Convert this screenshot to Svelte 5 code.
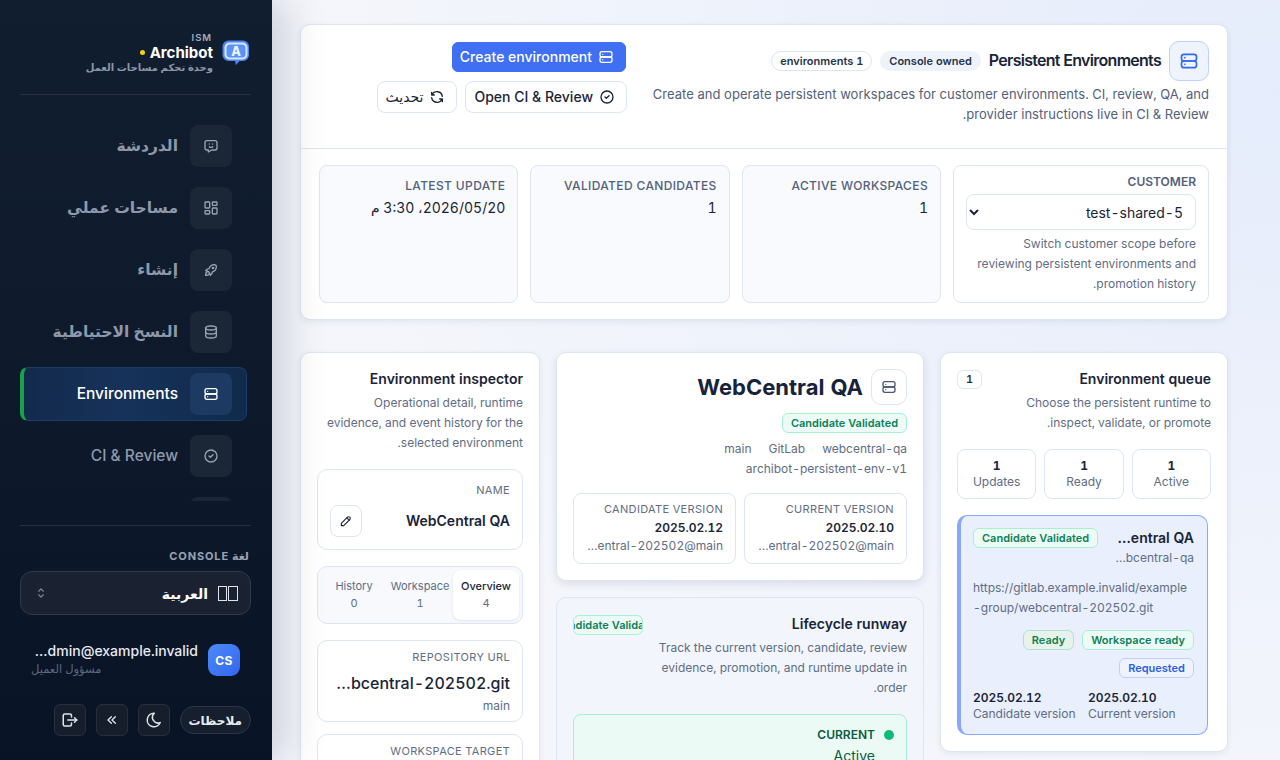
<script>
  const paths = {
    server: ['M6 4h12a3 3 0 0 1 3 3v2a3 3 0 0 1 -3 3h-12a3 3 0 0 1 -3 -3v-2a3 3 0 0 1 3 -3z', 'M6 12h12a3 3 0 0 1 3 3v2a3 3 0 0 1 -3 3h-12a3 3 0 0 1 -3 -3v-2a3 3 0 0 1 3 -3z', 'M7 8v.01', 'M7 16v.01'],
    chat: ['M18 4a3 3 0 0 1 3 3v8a3 3 0 0 1 -3 3h-5l-5 3v-3h-2a3 3 0 0 1 -3 -3v-8a3 3 0 0 1 3 -3h12z', 'M9.5 9h.01', 'M14.5 9h.01', 'M9.5 13a3.5 3.5 0 0 0 5 0'],
    layout: ['M4 3h5a1 1 0 0 1 1 1v7a1 1 0 0 1 -1 1h-5a1 1 0 0 1 -1 -1v-7a1 1 0 0 1 1 -1z', 'M15 3h5a1 1 0 0 1 1 1v3a1 1 0 0 1 -1 1h-5a1 1 0 0 1 -1 -1v-3a1 1 0 0 1 1 -1z', 'M15 12h5a1 1 0 0 1 1 1v7a1 1 0 0 1 -1 1h-5a1 1 0 0 1 -1 -1v-7a1 1 0 0 1 1 -1z', 'M4 16h5a1 1 0 0 1 1 1v3a1 1 0 0 1 -1 1h-5a1 1 0 0 1 -1 -1v-3a1 1 0 0 1 1 -1z'],
    rocket: ['M4 13a8 8 0 0 1 7 7a6 6 0 0 0 3 -5a9 9 0 0 0 6 -8a3 3 0 0 0 -3 -3a9 9 0 0 0 -8 6a6 6 0 0 0 -5 3', 'M7 14a6 6 0 0 0 -3 6a6 6 0 0 0 6 -3', 'M15 9m-1 0a1 1 0 1 0 2 0a1 1 0 1 0 -2 0'],
    database: ['M12 6m-8 0a8 3 0 1 0 16 0a8 3 0 1 0 -16 0', 'M4 6v6a8 3 0 0 0 16 0v-6', 'M4 12v6a8 3 0 0 0 16 0v-6'],
    check: ['M12 12m-9 0a9 9 0 1 0 18 0a9 9 0 1 0 -18 0', 'M9 12l2 2l4 -4'],
    refresh: ['M20 11a8.1 8.1 0 0 0 -15.5 -2m-.5 -4v4h4', 'M4 13a8.1 8.1 0 0 0 15.5 2m.5 4v-4h-4'],
    pencil: ['M4 20h4l10.5 -10.5a2.828 2.828 0 1 0 -4 -4l-10.5 10.5v4', 'M13.5 6.5l4 4'],
    moon: ['M12 3c.132 0 .263 0 .393 0a7.5 7.5 0 0 0 7.92 12.446a9 9 0 1 1 -8.313 -12.454z'],
    chevrons: ['M11 7l-5 5l5 5', 'M17 7l-5 5l5 5'],
    logout: ['M14 8v-2a2 2 0 0 0 -2 -2h-7a2 2 0 0 0 -2 2v12a2 2 0 0 0 2 2h7a2 2 0 0 0 2 -2v-2', 'M9 12h12l-3 -3', 'M18 15l3 -3'],
    selector: ['M8 9l4 -4l4 4', 'M16 15l-4 4l-4 -4']
  };
  const nav = [
    { label: 'الدردشة', icon: 'chat' },
    { label: 'مساحات عملي', icon: 'layout' },
    { label: 'إنشاء', icon: 'rocket' },
    { label: 'النسخ الاحتياطية', icon: 'database' },
    { label: 'Environments', icon: 'server', active: true, latin: true },
    { label: 'CI & Review', icon: 'check', latin: true },
    { label: '', icon: 'layout' }
  ];
  const stats = [
    { label: 'ACTIVE WORKSPACES', value: '1' },
    { label: 'VALIDATED CANDIDATES', value: '1' },
    { label: 'LATEST UPDATE', value: '2026/05/20، 3:30 م' }
  ];
  const metrics = [['1', 'Active'], ['1', 'Ready'], ['1', 'Updates']];
  const versions = [
    { label: 'CURRENT VERSION', value: '2025.02.10' },
    { label: 'CANDIDATE VERSION', value: '2025.02.12' }
  ];
  const tabs = [
    { label: 'Overview', n: 4, active: true },
    { label: 'Workspace', n: 1 },
    { label: 'History', n: 0 }
  ];
</script>

{#snippet icon(name, size)}
  <svg class="ico" width={size} height={size} viewBox="0 0 24 24" fill="none" stroke="currentColor" stroke-width="2" stroke-linecap="round" stroke-linejoin="round" aria-hidden="true">
    {#each paths[name] as d}<path {d} />{/each}
  </svg>
{/snippet}

<div class="shell">
  <aside class="sidebar">
    <div class="brand">
      <svg class="logo" width="28" height="26" viewBox="0 0 28 26" aria-hidden="true">
        <path d="M7 0.500h14a6 6 0 0 1 6 6v8.500a6 6 0 0 1 -6 6h-3.500l-3.500 4l-1 -4h-6.500a6 6 0 0 1 -6 -6v-8.500a6 6 0 0 1 6 -6z" fill="#4d86f8" />
        <rect x="2.500" y="2.500" width="23" height="17" rx="5" fill="#d8e6ff" />
        <rect x="4.500" y="4.500" width="19" height="13" rx="3.500" fill="#5b93fa" />
        <text x="14" y="16.300" text-anchor="middle" class="logo-a">A</text>
      </svg>
      <div class="brand-text">
        <div class="ism">ISM</div>
        <div class="brand-name"><span>Archibot</span><i class="dot"></i></div>
        <div class="brand-sub">وحدة تحكم مساحات العمل</div>
      </div>
    </div>

    <nav class="nav">
      {#each nav as item}
        <div class="nav-item" class:active={item.active} class:latin={item.latin}>
          <span class="nav-ico">{@render icon(item.icon, 16)}</span>
          {#if item.label}<span class="nav-label">{item.label}</span>{/if}
        </div>
      {/each}
    </nav>

    <div class="side-foot">
      <div class="lang-label">لغة CONSOLE</div>
      <div class="lang">
        <span class="flag" aria-hidden="true"><i></i><i></i></span>
        <span class="lang-name">العربية</span>
        <span class="lang-chev">{@render icon('selector', 14)}</span>
      </div>
      <div class="user">
        <div class="avatar">CS</div>
        <div class="user-text">
          <div class="email">customer-admin@example.invalid</div>
          <div class="role">مسؤول العميل</div>
        </div>
      </div>
      <div class="tools">
        <button class="pill">ملاحظات</button>
        <button class="tool">{@render icon('moon', 18)}</button>
        <button class="tool">{@render icon('chevrons', 16)}</button>
        <button class="tool">{@render icon('logout', 18)}</button>
      </div>
    </div>
  </aside>

  <main class="main">
    <section class="card hero">
      <header class="hero-head">
        <div class="hero-text">
          <div class="hero-title">
            <span class="hero-ico">{@render icon('server', 20)}</span>
            <h1>Persistent Environments</h1>
            <span class="pill-tag soft">Console owned</span>
            <span class="pill-tag line">1 environments</span>
          </div>
          <p class="hero-desc">Create and operate persistent workspaces for customer environments. CI, review, QA, and provider instructions live in CI &amp; Review.</p>
        </div>
        <div class="hero-actions">
          <button class="btn primary">{@render icon('server', 16)}<span>Create environment</span></button>
          <div class="action-row">
            <button class="btn">{@render icon('check', 16)}<span>Open CI &amp; Review</span></button>
            <button class="btn">{@render icon('refresh', 16)}<span>تحديث</span></button>
          </div>
        </div>
      </header>
      <div class="stats">
        <div class="stat customer">
          <label class="cust-label" for="cust">CUSTOMER</label>
          <select id="cust" class="cust-select"><option>test-shared-5</option></select>
          <p class="cust-desc">Switch customer scope before reviewing persistent environments and promotion history.</p>
        </div>
        {#each stats as s}
          <div class="stat">
            <div class="stat-label">{s.label}</div>
            <div class="stat-value">{s.value}</div>
          </div>
        {/each}
      </div>
    </section>

    <div class="columns">
      <section class="card panel queue">
        <div class="panel-head">
          <div class="head-text">
            <h2>Environment queue</h2>
            <p class="panel-desc">Choose the persistent runtime to inspect, validate, or promote.</p>
          </div>
          <span class="count">1</span>
        </div>
        <div class="metrics">
          {#each metrics as m}
            <div class="metric"><b>{m[0]}</b><span>{m[1]}</span></div>
          {/each}
        </div>
        <article class="env">
          <div class="env-top">
            <div class="env-names">
              <div class="env-name">WebCentral QA</div>
              <div class="env-slug">webcentral-qa</div>
            </div>
            <span class="badge green">Candidate Validated</span>
          </div>
          <div class="env-url">https://gitlab.example.invalid/example-group/webcentral-202502.git</div>
          <div class="env-tags">
            <span class="badge green">Workspace ready</span>
            <span class="badge ready">Ready</span>
            <span class="badge blue">Requested</span>
          </div>
          <div class="env-vers">
            <div><b>2025.02.10</b><span>Current version</span></div>
            <div><b>2025.02.12</b><span>Candidate version</span></div>
          </div>
        </article>
      </section>

      <div class="center">
        <section class="card panel detail">
          <div class="detail-head">
            <span class="square">{@render icon('server', 16)}</span>
            <h2 class="big">WebCentral QA</h2>
          </div>
          <div class="detail-badge"><span class="badge green">Candidate Validated</span></div>
          <div class="meta">
            <span>webcentral-qa</span><span>GitLab</span><span>main</span><span>archibot-persistent-env-v1</span>
          </div>
          <div class="vers">
            {#each versions as v}
              <div class="ver">
                <div class="ver-label">{v.label}</div>
                <div class="ver-value">{v.value}</div>
                <div class="ver-sub">webcentral-202502@main</div>
              </div>
            {/each}
          </div>
        </section>

        <section class="card panel runway">
          <div class="panel-head">
            <div class="head-text">
              <h2>Lifecycle runway</h2>
              <p class="panel-desc">Track the current version, candidate, review evidence, promotion, and runtime update in order.</p>
            </div>
            <span class="badge green clipped"><span>Candidate Validated</span></span>
          </div>
          <div class="step">
            <div class="step-head"><i class="step-dot"></i><span>CURRENT</span></div>
            <div class="step-val">Active</div>
          </div>
        </section>
      </div>

      <section class="card panel inspector">
        <h2>Environment inspector</h2>
        <p class="panel-desc">Operational detail, runtime evidence, and event history for the selected environment.</p>
        <div class="box name-box">
          <div class="box-label">NAME</div>
          <div class="name-row">
            <span class="name-val">WebCentral QA</span>
            <button class="edit">{@render icon('pencil', 14)}</button>
          </div>
        </div>
        <div class="tabs">
          {#each tabs as t}
            <div class="tab" class:on={t.active}><span>{t.label}</span><span>{t.n}</span></div>
          {/each}
        </div>
        <div class="box repo">
          <div class="box-label">REPOSITORY URL</div>
          <div class="box-val">https://gitlab.example.invalid/example-group/webcentral-202502.git</div>
          <div class="box-sub">main</div>
        </div>
        <div class="box target">
          <div class="box-label">WORKSPACE TARGET</div>
        </div>
      </section>
    </div>
  </main>
</div>

<style>
  :global(body) {
    margin: 0;
    overflow: hidden;
    font-family: Inter, "DejaVu Sans", sans-serif;
    font-feature-settings: "tnum";
    color: #1a2438;
  }
  * { box-sizing: border-box; }
  h1, h2, p { margin: 0; }
  button, select { font-family: inherit; font-feature-settings: inherit; }
  button { cursor: pointer; }
  .ico { display: block; flex: none; }

  .shell { display: flex; height: 760px; overflow: hidden; }

  /* sidebar */
  .sidebar {
    direction: rtl;
    width: 272px;
    flex: none;
    position: relative;
    z-index: 2;
    display: flex;
    flex-direction: column;
    padding: 0 21px 24px 20px;
    background: linear-gradient(180deg, #111e30 0%, #0f1b2d 40%, #091326 100%);
    box-shadow: 12px 0 40px rgba(15, 23, 42, 0.18);
  }
  .brand {
    height: 95px;
    flex: none;
    display: flex;
    align-items: center;
    gap: 9px;
    padding-top: 10px;
    border-bottom: 1px solid #26303f;
  }
  .logo { margin-inline-start: 1px; margin-top: 2px; }
  .logo-a { font: 800 12.500px Inter, sans-serif; fill: #eef4ff; }
  .brand-text { display: flex; flex-direction: column; }
  .ism { font-size: 9.500px; font-weight: 600; letter-spacing: 0.1em; color: #a2adbb; line-height: 15px; margin-inline-start: 1px; }
  .brand-name { display: flex; align-items: center; gap: 5px; font-size: 15px; font-weight: 700; color: #fff; line-height: 15px; }
  .dot { width: 5px; height: 5px; border-radius: 50%; background: #facc15; }
  .brand-sub { font-size: 10px; font-weight: 700; color: #8b97a8; line-height: 15px; }

  .nav {
    flex: none;
    height: 406px;
    overflow: hidden;
    padding-top: 24px;
    margin-inline-start: 4px;
    display: flex;
    flex-direction: column;
    gap: 8px;
  }
  .nav-item {
    flex: none;
    height: 54px;
    display: flex;
    align-items: center;
    gap: 12px;
    padding-inline-start: 14px;
    border: 1px solid transparent;
    border-radius: 8px;
    color: #8d99ab;
    font-size: 15.500px;
    font-weight: 600;
    line-height: 20px;
  }
  .nav-item.latin { font-weight: 500; }
  .nav-label { margin-top: -1px; }
  .nav-item.active {
    color: #fff;
    background: linear-gradient(270deg, #0f2a4a 0%, #17325a 55%, #122a4c 100%);
    border-color: #1d3c69;
    border-left: 4px solid #16a34a;
  }
  .nav-ico {
    width: 42px;
    height: 42px;
    flex: none;
    border-radius: 8px;
    display: flex;
    align-items: center;
    justify-content: center;
    background: #1b2636;
    color: #98a4b5;
  }
  .active .nav-ico { background: #1d3a63; color: #fff; }

  .side-foot { margin-top: 24px; border-top: 1px solid #26303f; padding-top: 22px; }
  .lang-label { font-size: 11px; font-weight: 700; letter-spacing: 0.08em; color: #97a3b4; line-height: 16px; margin-inline-start: 2px; }
  .lang {
    margin-top: 7px;
    height: 44px;
    border: 1px solid #2f3949;
    border-radius: 12px;
    background: #1a2231;
    display: flex;
    align-items: center;
    padding: 0 12px;
    gap: 10px;
    color: #fff;
    font-size: 14px;
    font-weight: 700;
  }
  .flag { display: flex; gap: 1px; }
  .flag i { display: block; width: 10px; height: 15px; border: 1px solid #dfe3ea; }
  .flag i:last-child { width: 9px; }
  .lang-chev { margin-inline-start: auto; margin-inline-end: 1px; color: #7e8a9b; }

  .user { display: flex; align-items: center; gap: 10px; margin-top: 29px; padding-inline-start: 11px; height: 32px; }
  .avatar {
    width: 32px; height: 32px; flex: none;
    border-radius: 9px;
    background: linear-gradient(135deg, #4c8bf8, #3366f0);
    color: #fff; font-size: 12px; font-weight: 700; letter-spacing: 0.03em;
    display: flex; align-items: center; justify-content: center;
  }
  .user-text { min-width: 0; flex: 1; margin-inline-end: 11px; }
  .email { font-size: 14px; font-weight: 500; color: #e6eaf0; line-height: 18px; white-space: nowrap; overflow: hidden; text-overflow: ellipsis; }
  .role { font-size: 11.500px; color: #5d6a7d; line-height: 18px; text-align: left; }

  .tools { display: flex; align-items: center; gap: 10px; margin-top: 28px; }
  .pill {
    height: 28px; padding: 0 8px; width: 71px; border-radius: 14px;
    border: 1px solid #2c3646; background: #161f2e; color: #e8ecf2;
    font-size: 12px; font-weight: 700;
  }
  .tool {
    width: 32px; height: 32px; padding: 0; border-radius: 6px;
    border: 1px solid #262f3e; background: #161e2c; color: #dfe4eb;
    display: flex; align-items: center; justify-content: center;
  }

  /* main */
  .main {
    direction: rtl;
    flex: 1;
    min-width: 0;
    padding: 24px 52px 0 28px;
    background:
      radial-gradient(950px 720px at 100% 12%, #e5ecfb 0%, rgba(229, 236, 251, 0) 100%),
      #f4f6fb;
  }
  .card {
    background: #fff;
    border: 1px solid #dde5f2;
    border-radius: 10px;
    box-shadow: 0 2px 6px rgba(30, 50, 90, 0.08);
  }
  .hero-head {
    display: flex;
    justify-content: space-between;
    gap: 12px;
    height: 124px;
    padding: 16px 18px;
    border-bottom: 1px solid #dde5f2;
  }
  .hero-title { display: flex; align-items: center; gap: 8px; }
  .hero-ico {
    width: 40px; height: 40px; flex: none;
    border-radius: 10px; border: 1px solid #bcd0f8; background: #eef3fe; color: #2f6bf2;
    display: flex; align-items: center; justify-content: center;
  }
  h1 { font-size: 16px; font-weight: 600; letter-spacing: -0.72px; line-height: 22px; margin-bottom: 2px; white-space: nowrap; }
  .pill-tag { height: 20px; padding: 0 9px; border-radius: 10px; font-size: 11px; font-weight: 600; line-height: 20px; white-space: nowrap; color: #27324a; }
  .pill-tag.soft { background: #eef2fb; }
  .pill-tag.line { background: #fff; border: 1px solid #dde5f2; line-height: 18px; padding: 0 8px; }
  .hero-desc { width: 560px; margin-top: 3px; font-size: 13px; letter-spacing: 0.05px; line-height: 20px; color: #53617a; }
  .hero-actions { width: 308px; flex: none; padding-top: 1px; }
  .btn {
    height: 32px; padding: 0 11px 0 8px; display: inline-flex; align-items: center; gap: 6px;
    border: 1px solid #dde5f2; border-radius: 8px; background: #fff; color: #1a2438;
    font-size: 14px; font-weight: 500; line-height: 16px; white-space: nowrap;
  }
  .btn.primary { height: 30px; padding-left: 7px; background: #3f6ff3; border-color: #3f6ff3; color: #fff; border-radius: 6px; margin-inline-start: 1px; }
  .action-row { display: flex; gap: 8px; margin-top: 9px; }

  .stats { display: grid; grid-template-columns: 256px repeat(3, minmax(0, 1fr)); gap: 12px; padding: 16px 18px; }
  .stat { height: 138px; border: 1px solid #dde5f2; border-radius: 8px; padding: 12px; background: #f8fafd; }
  .stat.customer { background: #fff; padding: 8px 12px; }
  .stat-label { font-size: 12px; font-weight: 500; letter-spacing: 0.03em; color: #53617a; line-height: 16px; }
  .stat-value { font-size: 14px; line-height: 20px; margin-top: 4px; color: #1a2438; }
  .cust-label { display: block; font-size: 12px; font-weight: 600; color: #53617a; line-height: 16px; }
  .cust-select {
    display: block; width: 100%; height: 36px; margin-top: 4px; padding: 0 8px;
    border: 1px solid #dde5f2; border-radius: 8px; background: #fff;
    font-size: 14px; color: #1a2438;
  }
  .cust-desc { margin-top: 4px; font-size: 12px; line-height: 20px; color: #5f6d85; }

  .columns { display: grid; grid-template-columns: 288px 368px 240px; column-gap: 16px; margin-top: 32px; align-items: start; }
  .panel { padding: 16px; }
  h2 { font-size: 14px; font-weight: 600; line-height: 20px; color: #1a2438; white-space: nowrap; }
  .panel-head { display: flex; justify-content: space-between; align-items: flex-start; gap: 8px; }
  .head-text { flex: 1; min-width: 0; }
  .panel-desc { margin-top: 4px; font-size: 12px; line-height: 20px; color: #5f6d85; }
  .count { min-width: 25px; height: 19px; margin-top: 1px; border: 1px solid #dde5f2; border-radius: 6px; font-size: 11px; font-weight: 600; line-height: 17px; text-align: center; color: #27324a; flex: none; }
  .queue .head-text { margin-inline-end: 4px; }

  .queue { height: 400px; }
  .metrics { display: grid; grid-template-columns: repeat(3, minmax(0, 1fr)); gap: 8px; margin-top: 16px; }
  .metric { height: 50px; border: 1px solid #dde5f2; border-radius: 8px; display: flex; flex-direction: column; align-items: center; justify-content: center; font-size: 12px; line-height: 16px; color: #5f6d85; }
  .metric b { font-size: 12px; font-weight: 700; color: #1a2438; }
  .env {
    margin-top: 16px; margin-inline-start: 3px;
    height: 220px;
    padding: 12px 13px 12px 12px;
    border: 1px solid #8aa8fb;
    border-left: 4px solid #8aa8fb;
    border-radius: 10px;
    background: #e9effd;
  }
  .env-top { display: flex; justify-content: space-between; align-items: flex-start; gap: 16px; }
  .env-names { min-width: 0; flex: 1; }
  .env-name { font-size: 14px; font-weight: 600; line-height: 20px; white-space: nowrap; overflow: hidden; text-overflow: ellipsis; }
  .env-slug { font-size: 12px; line-height: 20px; color: #5f6d85; white-space: nowrap; overflow: hidden; text-overflow: ellipsis; }
  .env .badge { flex: none; }
  .env-url { margin-top: 10px; font-size: 12px; line-height: 20px; color: #5f6d85; text-align: left; word-break: break-all; }
  .env-tags { display: flex; flex-wrap: wrap; gap: 8px; margin-top: 12px; }
  .env-vers { display: grid; grid-template-columns: 1fr 1fr; gap: 9px; margin-top: 12px; text-align: left; }
  .env-vers b { display: block; font-size: 12px; font-weight: 600; line-height: 16px; }
  .env-vers span { display: block; font-size: 12px; line-height: 16px; color: #5f6d85; white-space: nowrap; }

  .badge { display: inline-block; height: 20px; padding: 0 8px; border: 1px solid; border-radius: 6px; font-size: 11px; font-weight: 600; line-height: 18px; white-space: nowrap; }
  .badge.green { background: #ecfbf5; border-color: #a7f0d0; color: #0d8058; }
  .badge.ready { background: #e6f3ec; border-color: #b6dfc9; color: #15804f; }
  .badge.blue { background: #eef3fe; border-color: #c0d0f8; color: #2f5fe0; }
  .badge.clipped { width: 70px; flex: none; padding: 0; overflow: hidden; display: flex; justify-content: center; margin-top: 1px; }

  .center { display: flex; flex-direction: column; gap: 16px; min-width: 0; }
  .detail { height: 229px; box-shadow: 0 3px 8px rgba(30, 50, 90, 0.12); }
  .detail-head { display: flex; align-items: center; gap: 8px; height: 36px; }
  .square { width: 36px; height: 36px; border: 1px solid #dde5f2; border-radius: 10px; display: flex; align-items: center; justify-content: center; color: #4b586f; flex: none; }
  .big { font-size: 22px; font-weight: 700; line-height: 28px; color: #16233a; }
  .detail-badge { margin-top: 8px; height: 20px; display: flex; }
  .meta { display: flex; flex-wrap: wrap; gap: 0 17px; margin-top: 6px; font-size: 12px; line-height: 20px; color: #5f6d85; }
  .vers { display: grid; grid-template-columns: repeat(2, minmax(0, 1fr)); gap: 8px; margin-top: 14px; }
  .ver { height: 71px; min-width: 0; border: 1px solid #dde5f2; border-radius: 8px; padding: 7px 12px; }
  .ver-label { font-size: 11px; letter-spacing: 0.03em; line-height: 16px; margin-bottom: 1px; color: #5f6d85; }
  .ver-value { font-size: 12px; font-weight: 600; line-height: 20px; }
  .ver-sub { font-size: 12px; line-height: 16px; color: #5f6d85; white-space: nowrap; overflow: hidden; text-overflow: ellipsis; }

  .runway { background: #f2f5fb; box-shadow: none; height: 300px; }
  .step { margin-top: 16px; height: 120px; padding: 11px 12px; border: 1px solid #a7f0d0; border-radius: 8px; background: #ecfaf5; }
  .step-head { display: flex; align-items: center; gap: 9px; font-size: 12px; font-weight: 600; color: #0b5b43; line-height: 18px; }
  .step-dot { width: 10px; height: 10px; border-radius: 50%; background: #10bb7a; }
  .step-val { font-size: 14px; line-height: 20px; color: #0b5b43; margin-top: 2px; padding-inline-start: 19px; }

  .inspector { height: 460px; }
  .box { margin-top: 16px; border: 1px solid #dde5f2; border-radius: 10px; padding: 8px 12px; background: #fff; }
  .box-label { font-size: 11px; letter-spacing: 0.03em; line-height: 16px; color: #5f6d85; }
  .box-val { font-size: 16px; font-weight: 500; line-height: 22px; margin-top: 7px; white-space: nowrap; overflow: hidden; text-overflow: ellipsis; }
  .box-sub { font-size: 12px; line-height: 16px; color: #5f6d85; margin-top: 4px; }
  .name-box { height: 81px; padding-top: 12px; }
  .name-row { display: flex; justify-content: space-between; align-items: center; margin-top: 7px; }
  .name-val { font-size: 14px; font-weight: 600; line-height: 20px; }
  .edit { width: 32px; height: 32px; padding: 0; border: 1px solid #dde5f2; border-radius: 8px; background: #fff; color: #1a2438; display: flex; align-items: center; justify-content: center; }
  .tabs { margin-top: 16px; height: 58px; padding: 3px; border: 1px solid #dde5f2; border-radius: 10px; background: #f7f9fd; display: grid; grid-template-columns: repeat(3, minmax(0, 1fr)); }
  .tab { display: flex; flex-direction: column; align-items: center; justify-content: center; font-size: 11px; line-height: 17px; color: #5f6d85; border-radius: 8px; }
  .tab.on { background: #fff; box-shadow: 0 1px 3px rgba(30, 50, 90, 0.1); }
  .tab.on span:first-child { color: #1a2438; font-weight: 500; }
  .repo { height: 82px; }
  .target { margin-top: 12px; height: 80px; }
</style>
